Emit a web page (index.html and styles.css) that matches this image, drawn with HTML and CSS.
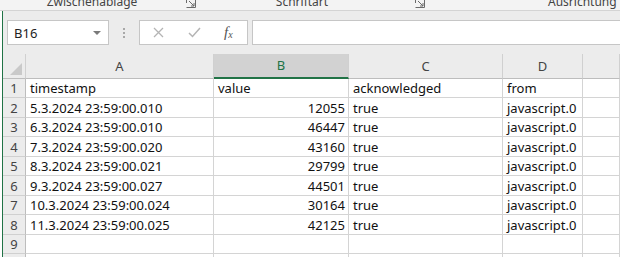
FILE: index.html
```html
<!DOCTYPE html>
<html lang="de">
<head>
<meta charset="utf-8">
<title>Excel</title>
<link rel="stylesheet" href="styles.css">
</head>
<body>
<div class="ribbon">
  <span class="rlabel g1">Zwischenablage</span>
  <svg class="launch l1" width="10" height="10" viewBox="0 0 10 10"><path d="M0.5 5V0.5H5M0.5 9.5H9.5V0.5M3 3L8 8M8 5V8H5" fill="none" stroke="#6a6a6a" stroke-width="1"/></svg>
  <span class="rlabel g2">Schriftart</span>
  <svg class="launch l2" width="10" height="10" viewBox="0 0 10 10"><path d="M0.5 5V0.5H5M0.5 9.5H9.5V0.5M3 3L8 8M8 5V8H5" fill="none" stroke="#6a6a6a" stroke-width="1"/></svg>
  <span class="rlabel g3">Ausrichtung</span>
</div>
<div class="workspace">
  <div class="fbar">
    <div class="namebox"><span class="nbtext">B16</span><span class="caret"></span></div>
    <div class="grip"><i></i><i></i><i></i></div>
    <div class="fbtns">
      <svg class="ico" width="11" height="11" viewBox="0 0 11 11"><path d="M1 1L10 10M10 1L1 10" stroke="#b4b4b4" stroke-width="1.3" fill="none"/></svg>
      <svg class="ico" width="13" height="11" viewBox="0 0 13 11"><path d="M1 6L4.5 9.5L12 1" stroke="#b4b4b4" stroke-width="1.5" fill="none"/></svg>
      <span class="fx">f<sub>x</sub></span>
    </div>
    <div class="finput"></div>
  </div>
  <div class="sheet">
    <div class="corner"><span class="tri"></span></div>
    <div class="ch">A</div><div class="ch sel">B</div><div class="ch">C</div><div class="ch">D</div><div class="ch"></div>

    <div class="rh">1</div><div class="c">timestamp</div><div class="c">value</div><div class="c">acknowledged</div><div class="c">from</div><div class="c"></div>
    <div class="rh">2</div><div class="c">5.3.2024 23:59:00.010</div><div class="c num">12055</div><div class="c">true</div><div class="c">javascript.0</div><div class="c"></div>
    <div class="rh">3</div><div class="c">6.3.2024 23:59:00.010</div><div class="c num">46447</div><div class="c">true</div><div class="c">javascript.0</div><div class="c"></div>
    <div class="rh">4</div><div class="c">7.3.2024 23:59:00.020</div><div class="c num">43160</div><div class="c">true</div><div class="c">javascript.0</div><div class="c"></div>
    <div class="rh">5</div><div class="c">8.3.2024 23:59:00.021</div><div class="c num">29799</div><div class="c">true</div><div class="c">javascript.0</div><div class="c"></div>
    <div class="rh">6</div><div class="c">9.3.2024 23:59:00.027</div><div class="c num">44501</div><div class="c">true</div><div class="c">javascript.0</div><div class="c"></div>
    <div class="rh">7</div><div class="c">10.3.2024 23:59:00.024</div><div class="c num">30164</div><div class="c">true</div><div class="c">javascript.0</div><div class="c"></div>
    <div class="rh">8</div><div class="c">11.3.2024 23:59:00.025</div><div class="c num">42125</div><div class="c">true</div><div class="c">javascript.0</div><div class="c"></div>
    <div class="rh">9</div><div class="c"></div><div class="c"></div><div class="c"></div><div class="c"></div><div class="c"></div>
    <div class="rh rh10"></div><div class="c"></div><div class="c"></div><div class="c"></div><div class="c"></div><div class="c"></div>
  </div>
</div>
</body>
</html>
```
FILE: styles.css
```css
* { box-sizing: border-box; }
html, body { margin: 0; padding: 0; }
body {
  width: 620px;
  height: 257px;
  overflow: hidden;
  background: #ffffff;
  font-family: "Noto Sans", "Open Sans", sans-serif;
}

/* ribbon strip (cut off at top) */
.ribbon {
  height: 11px;
  background: #f3f3f3;
  border-bottom: 1px solid #d4d4d4;
  display: flex;
  align-items: flex-end;
  overflow: hidden;
  white-space: nowrap;
}
.rlabel {
  font-family: "Noto Sans", "Open Sans", sans-serif;
  font-size: 12px;
  line-height: 14px;
  color: #444;
  margin-bottom: 1px;
}
.g1 { width: 184px; text-align: center; }
.l1 { margin-left: 2px; margin-bottom: 2px; flex: none; }
.g2 { width: 212px; text-align: center; }
.l2 { margin-left: 7px; margin-bottom: 2px; flex: none; }
.g3 { margin-left: 123px; }

/* workspace */
.workspace {
  margin-left: 2px;
  border-left: 1px solid #217346;
  background: #ececec;
  height: 246px;
  overflow: hidden;
}

.fbar {
  display: flex;
  align-items: stretch;
  height: 43px;
  padding-top: 9px;
  padding-bottom: 9px;
}
.namebox {
  margin-left: 4px;
  width: 102px;
  background: #fff;
  border: 1px solid #c6c6c6;
  display: flex;
  align-items: center;
  justify-content: space-between;
  padding: 0 7px 0 6px;
}
.nbtext {
  font-size: 13px;
  color: #222;
}
.caret {
  width: 0;
  height: 0;
  border-left: 4px solid transparent;
  border-right: 4px solid transparent;
  border-top: 4px solid #7a7a7a;
}
.grip {
  width: 30px;
  display: flex;
  flex-direction: column;
  align-items: center;
  justify-content: center;
  gap: 2px;
}
.grip i {
  display: block;
  width: 2px;
  height: 2px;
  background: #a8a8a8;
}
.fbtns {
  width: 109px;
  background: #fff;
  border: 1px solid #c6c6c6;
  display: flex;
  align-items: center;
  padding-left: 13px;
}
.fbtns .ico:nth-child(2) { margin-left: 24px; }
.fx {
  margin-left: 23px;
  font-family: "Liberation Serif", "DejaVu Serif", serif;
  font-style: italic;
  font-size: 15px;
  color: #555;
  line-height: 1;
}
.fx sub {
  font-size: 10px;
  vertical-align: -1px;
}
.finput {
  flex: 1;
  margin-left: 4px;
  background: #fff;
  border: 1px solid #c6c6c6;
  border-right: none;
}

/* sheet grid */
.sheet {
  display: grid;
  grid-template-columns: 23px 188px 135px 154px 80px 1fr;
  grid-template-rows: 25px 19px 20px 19px 20px 19px 20px 19px 20px 19px 20px;
  background: #fff;
  font-size: 13px;
  color: #111;
}
.corner, .ch, .rh {
  background: #ececec;
  color: #444;
  border-right: 1px solid #d0d0d0;
  border-bottom: 1px solid #bdbdbd;
}
.corner {
  position: relative;
}
.tri {
  position: absolute;
  right: 3px;
  bottom: 3px;
  width: 0;
  height: 0;
  border-left: 12px solid transparent;
  border-bottom: 12px solid #c9c9c9;
}
.ch {
  display: flex;
  align-items: center;
  justify-content: center;
  padding-bottom: 1px;
}
.ch.sel {
  background: #d2d2d2;
  border-bottom: 2px solid #217346;
  color: #217346;
}
.rh {
  display: flex;
  align-items: center;
  justify-content: center;
  border-bottom: 1px solid #d0d0d0;
  border-right: 1px solid #bdbdbd;
}
.c {
  border-right: 1px solid #d4d4d4;
  border-bottom: 1px solid #d4d4d4;
  padding: 0 3px 0 4px;
  display: flex;
  align-items: center;
  white-space: nowrap;
}
.c.num { justify-content: flex-end; padding-right: 3px; }
```
